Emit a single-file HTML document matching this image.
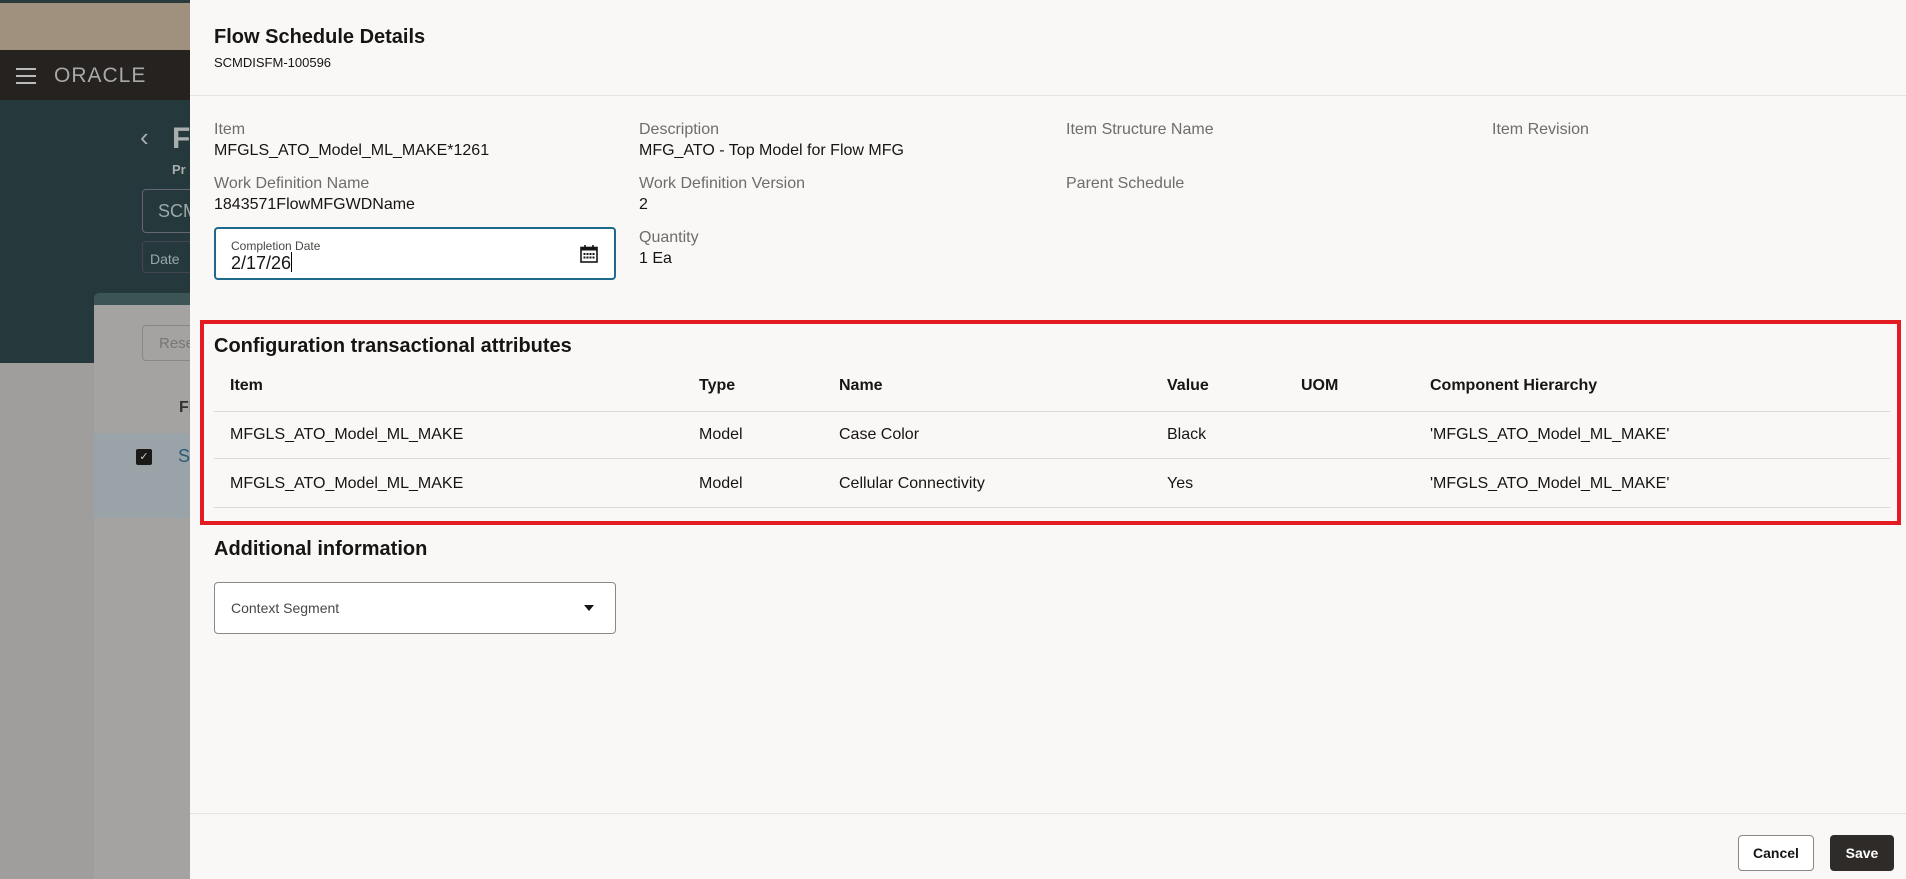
<!DOCTYPE html>
<html><head><meta charset="utf-8"><style>
*{margin:0;padding:0;box-sizing:border-box}
body{width:1906px;height:879px;overflow:hidden;position:relative;font-family:"Liberation Sans",sans-serif;background:#a09e9c;color:#161513}
.a{position:absolute}
.lab{position:absolute;font-size:16px;color:#6f6c69}
.val{position:absolute;font-size:16px;color:#161513}
.th{position:absolute;font-size:16px;font-weight:bold;top:377px}
.td{position:absolute;font-size:16px}
.hl{position:absolute;left:214px;width:1676px;height:1px;background:#dcdad7}
</style></head><body>
<div class="a" style="left:0;top:0;width:190px;height:3px;background:#2a3a3c"></div>
<div class="a" style="left:0;top:3px;width:190px;height:47px;background:#a0917e"></div>
<div class="a" style="left:0;top:50px;width:190px;height:50px;background:#252220"></div>
<div class="a" style="left:16px;top:68px;width:20px;height:2px;background:#bbb"></div>
<div class="a" style="left:16px;top:75px;width:20px;height:2px;background:#bbb"></div>
<div class="a" style="left:16px;top:82px;width:20px;height:2px;background:#bbb"></div>
<div class="a" style="left:54px;top:64px;font-size:21px;letter-spacing:1px;color:#a8a8a8">ORACLE</div>
<div class="a" style="left:0;top:100px;width:190px;height:263px;background:#25383b"></div>
<div class="a" style="left:140px;top:122px;font-size:26px;color:#a9aeae">‹</div>
<div class="a" style="left:172px;top:122px;font-size:30px;font-weight:bold;color:#a9aeae">F</div>
<div class="a" style="left:172px;top:162px;font-size:13px;font-weight:bold;color:#a9aeae">Pr</div>
<div class="a" style="left:142px;top:189px;width:60px;height:44px;border:1px solid #667;border-radius:4px"></div>
<div class="a" style="left:158px;top:201px;font-size:18px;color:#9aa">SCM</div>
<div class="a" style="left:142px;top:241px;width:50px;height:32px;border:1px solid #445;border-radius:4px"></div>
<div class="a" style="left:150px;top:251px;font-size:14px;color:#9aa">Date</div>
<div class="a" style="left:94px;top:293px;width:100px;height:586px;background:#a5a3a1;border-radius:6px 0 0 0"></div>
<div class="a" style="left:94px;top:293px;width:100px;height:12px;background:#3d5454;border-radius:6px 0 0 0"></div>
<div class="a" style="left:142px;top:325px;width:60px;height:36px;border:1px solid #8a8886;border-radius:4px"></div>
<div class="a" style="left:159px;top:335px;font-size:15px;color:#777">Rese</div>
<div class="a" style="left:179px;top:399px;font-size:16px;font-weight:bold;color:#333">Fl</div>
<div class="a" style="left:94px;top:433px;width:100px;height:85px;background:#9aa4a8"></div>
<div class="a" style="left:136px;top:449px;width:16px;height:16px;background:#1c1a18;border-radius:2px;color:#ccc;font-size:11px;text-align:center;line-height:16px">✓</div>
<div class="a" style="left:178px;top:446px;font-size:18px;color:#2a5a78">S</div>
<div class="a" style="left:190px;top:0;width:1716px;height:879px;background:#f9f8f6"></div>
<div class="a" style="left:214px;top:26px;font-size:20px;font-weight:bold">Flow Schedule Details</div>
<div class="a" style="left:214px;top:55px;font-size:13px">SCMDISFM-100596</div>
<div class="a" style="left:190px;top:95px;width:1716px;height:1px;background:#e6e4e1"></div>

<div class="lab" style="left:214px;top:121px">Item</div>
<div class="val" style="left:214px;top:142px">MFGLS_ATO_Model_ML_MAKE*1261</div>
<div class="lab" style="left:639px;top:121px">Description</div>
<div class="val" style="left:639px;top:142px">MFG_ATO - Top Model for Flow MFG</div>
<div class="lab" style="left:1066px;top:121px">Item Structure Name</div>
<div class="lab" style="left:1492px;top:121px">Item Revision</div>
<div class="lab" style="left:214px;top:175px">Work Definition Name</div>
<div class="val" style="left:214px;top:196px">1843571FlowMFGWDName</div>
<div class="lab" style="left:639px;top:175px">Work Definition Version</div>
<div class="val" style="left:639px;top:196px">2</div>
<div class="lab" style="left:1066px;top:175px">Parent Schedule</div>
<div class="lab" style="left:639px;top:229px">Quantity</div>
<div class="val" style="left:639px;top:250px">1 Ea</div>

<div class="a" style="left:214px;top:227px;width:402px;height:53px;border:2px solid #1d6a8d;border-radius:4px;background:#fff"></div>
<div class="a" style="left:231px;top:239px;font-size:12px;color:#4a4744">Completion Date</div>
<div class="a" style="left:231px;top:252px;font-size:18px">2/17/26<span style="display:inline-block;width:1px;height:20px;background:#000;vertical-align:-3px"></span></div>
<svg class="a" style="left:579px;top:244px" width="20" height="20" viewBox="0 0 20 20"><rect x="2" y="3.5" width="16" height="14.5" fill="none" stroke="#161513" stroke-width="1.6"/><rect x="2" y="3.5" width="16" height="3" fill="#161513"/><line x1="6" y1="1" x2="6" y2="5" stroke="#161513" stroke-width="1.6"/><line x1="14" y1="1" x2="14" y2="5" stroke="#161513" stroke-width="1.6"/><g fill="#161513"><rect x="4.5" y="9" width="2" height="2"/><rect x="7.5" y="9" width="2" height="2"/><rect x="10.5" y="9" width="2" height="2"/><rect x="13.5" y="9" width="2" height="2"/><rect x="4.5" y="12.5" width="2" height="2"/><rect x="7.5" y="12.5" width="2" height="2"/><rect x="10.5" y="12.5" width="2" height="2"/><rect x="13.5" y="12.5" width="2" height="2"/></g></svg>

<div class="a" style="left:200px;top:320px;width:1701px;height:205px;border:4px solid #e31c23"></div>
<div class="a" style="left:214px;top:335px;font-size:20px;font-weight:bold">Configuration transactional attributes</div>
<div class="th" style="left:230px">Item</div>
<div class="th" style="left:699px">Type</div>
<div class="th" style="left:839px">Name</div>
<div class="th" style="left:1167px">Value</div>
<div class="th" style="left:1301px">UOM</div>
<div class="th" style="left:1430px">Component Hierarchy</div>
<div class="hl" style="top:411px"></div>
<div class="td" style="left:230px;top:426px">MFGLS_ATO_Model_ML_MAKE</div>
<div class="td" style="left:699px;top:426px">Model</div>
<div class="td" style="left:839px;top:426px">Case Color</div>
<div class="td" style="left:1167px;top:426px">Black</div>
<div class="td" style="left:1430px;top:426px">'MFGLS_ATO_Model_ML_MAKE'</div>
<div class="hl" style="top:458px"></div>
<div class="td" style="left:230px;top:475px">MFGLS_ATO_Model_ML_MAKE</div>
<div class="td" style="left:699px;top:475px">Model</div>
<div class="td" style="left:839px;top:475px">Cellular Connectivity</div>
<div class="td" style="left:1167px;top:475px">Yes</div>
<div class="td" style="left:1430px;top:475px">'MFGLS_ATO_Model_ML_MAKE'</div>
<div class="hl" style="top:507px"></div>

<div class="a" style="left:214px;top:538px;font-size:20px;font-weight:bold">Additional information</div>
<div class="a" style="left:214px;top:582px;width:402px;height:52px;border:1px solid #8a8784;border-radius:4px;background:#fff"></div>
<div class="a" style="left:231px;top:600px;font-size:14px;color:#4a4744">Context Segment</div>
<div class="a" style="left:584px;top:605px;width:0;height:0;border-left:5px solid transparent;border-right:5px solid transparent;border-top:6px solid #161513"></div>

<div class="a" style="left:190px;top:813px;width:1716px;height:1px;background:#e6e4e1"></div>
<div class="a" style="left:1738px;top:835px;width:76px;height:36px;border:1px solid #8a8784;border-radius:4px;background:#fff;font-size:14px;font-weight:bold;text-align:center;line-height:34px">Cancel</div>
<div class="a" style="left:1830px;top:835px;width:64px;height:36px;border-radius:4px;background:#2f2b28;color:#fff;font-size:14px;font-weight:bold;text-align:center;line-height:36px">Save</div>
</body></html>
